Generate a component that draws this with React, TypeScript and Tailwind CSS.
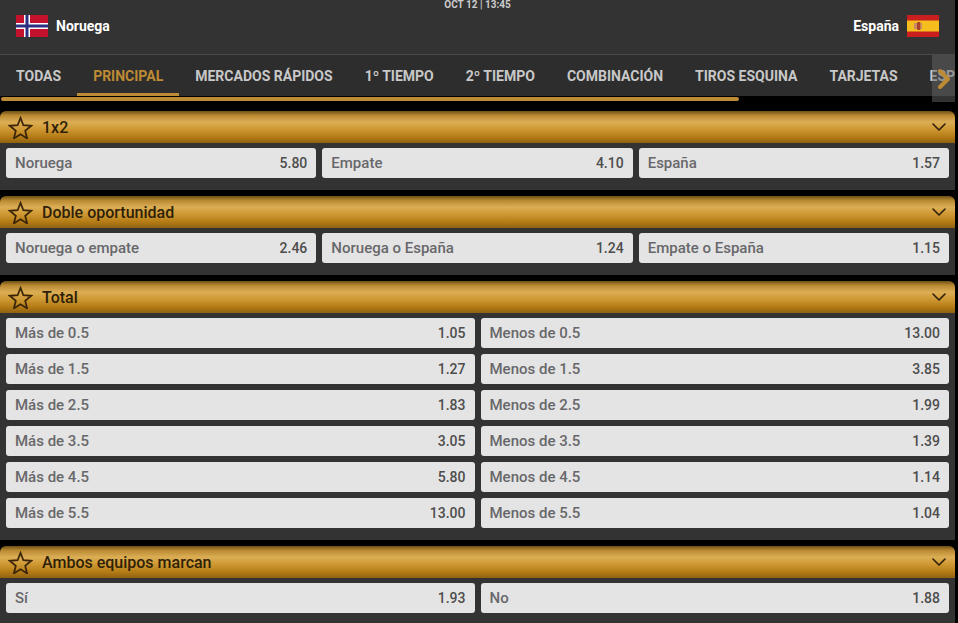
import React from 'react';
import { ChevronDown, ChevronRight } from 'lucide-react';

type Pick = { label: string; odd: string };
type Market = { title: string; cols: 2 | 3; picks: Pick[] };

const tabs = ['TODAS', 'PRINCIPAL', 'MERCADOS RÁPIDOS', '1º TIEMPO', '2º TIEMPO', 'COMBINACIÓN', 'TIROS ESQUINA', 'TARJETAS', 'ESP'];

const totals: [string, string, string][] = [
  ['0.5', '1.05', '13.00'],
  ['1.5', '1.27', '3.85'],
  ['2.5', '1.83', '1.99'],
  ['3.5', '3.05', '1.39'],
  ['4.5', '5.80', '1.14'],
  ['5.5', '13.00', '1.04'],
];

const markets: Market[] = [
  {
    title: '1x2',
    cols: 3,
    picks: [
      { label: 'Noruega', odd: '5.80' },
      { label: 'Empate', odd: '4.10' },
      { label: 'España', odd: '1.57' },
    ],
  },
  {
    title: 'Doble oportunidad',
    cols: 3,
    picks: [
      { label: 'Noruega o empate', odd: '2.46' },
      { label: 'Noruega o España', odd: '1.24' },
      { label: 'Empate o España', odd: '1.15' },
    ],
  },
  {
    title: 'Total',
    cols: 2,
    picks: totals.flatMap(([line, over, under]) => [
      { label: `Más de ${line}`, odd: over },
      { label: `Menos de ${line}`, odd: under },
    ]),
  },
  {
    title: 'Ambos equipos marcan',
    cols: 2,
    picks: [
      { label: 'Sí', odd: '1.93' },
      { label: 'No', odd: '1.88' },
    ],
  },
];

const NorwayFlag = () => (
  <svg width="32" height="22" viewBox="0 0 32 22" className="block">
    <rect width="32" height="22" fill="#c4122c" />
    <rect x="8" width="6" height="22" fill="#fff" />
    <rect y="8" width="32" height="6" fill="#fff" />
    <rect x="9.500" width="3" height="22" fill="#2b2f7f" />
    <rect y="9.500" width="32" height="3" fill="#2b2f7f" />
  </svg>
);

const SpainFlag = () => (
  <svg width="32" height="22" viewBox="0 0 32 22" className="block">
    <rect width="32" height="22" fill="#c9201f" />
    <rect y="5.500" width="32" height="11" fill="#f6bd1e" />
    <rect x="7" y="8" width="3" height="6" fill="#c98a6a" />
    <rect x="10" y="7" width="3.500" height="8" rx="1" fill="#a8402a" />
    <rect x="13.500" y="8" width="1.500" height="6" fill="#c98a6a" />
  </svg>
);

const Star = () => (
  <svg width="25" height="23" viewBox="0 0 26 24" fill="none" stroke="#3a2508" strokeWidth="1.8" strokeLinejoin="miter">
    <path d="M13 2l3 7.600 8.200.6-6.300 5.200 2 8-6.900-4.400-6.900 4.400 2-8L1.800 10.200 10 9.600z" />
  </svg>
);

const PickButton = ({ label, odd }: Pick) => (
  <div className="flex h-[30px] items-center justify-between rounded-[3px] bg-[#e4e4e4] px-[9px] text-[15px] font-medium text-[#68686b]">
    <span>{label}</span>
    <span className="text-[14px] text-[#4d4d4d]">{odd}</span>
  </div>
);

const MarketCard = ({ title, cols, picks }: Market) => (
  <section className="mb-[6px]">
    <header className="flex h-[32px] items-center justify-between rounded-t-[6px] bg-[linear-gradient(180deg,#6e4f17_0%,#b98a32_14%,#dcae55_35%,#d09a35_55%,#b67d16_80%,#8f6110_100%)] pl-[8px] pr-[4px] text-[16px] font-medium text-[#2e1f08]">
      <div className="flex items-center gap-[9px]">
        <Star />
        <span className="pt-[2px]">{title}</span>
      </div>
      <ChevronDown size={24} strokeWidth={1.6} color="#2e1f08" />
    </header>
    <div className={`grid gap-[6px] bg-[#333] px-[6px] pb-[12px] pt-[5px] ${cols === 3 ? 'grid-cols-3' : 'grid-cols-2'}`}>
      {picks.map((p) => (
        <PickButton key={p.label} label={p.label} odd={p.odd} />
      ))}
    </div>
  </section>
);

export default function App() {
  return (
    <div className="h-[623px] w-[958px] overflow-hidden bg-black font-['Roboto',sans-serif]">
      <div className="w-[955px]">
        <div className="relative flex h-[54px] items-center justify-between bg-[#333] pb-[2px] pl-[16px] pr-[16px] text-[14px] font-bold text-white">
          <span className="absolute left-0 right-0 top-0 text-center text-[10px] leading-[10px] text-[#ccc]">OCT 12 | 13:45</span>
          <div className="flex items-center gap-[8px]">
            <NorwayFlag />
            <span>Noruega</span>
          </div>
          <div className="flex items-center gap-[8px]">
            <span>España</span>
            <SpainFlag />
          </div>
        </div>

        <div className="relative border-t border-[#4a4a4a]">
          <nav className="flex h-[41px] overflow-hidden bg-[#2d2d2d]">
            {tabs.map((t) => (
              <div
                key={t}
                className={`flex shrink-0 items-center border-b-[3px] px-[16px] pt-[4px] text-[14px] font-bold ${
                  t === 'PRINCIPAL' ? 'border-[#bd8b33] text-[#bd8b33]' : 'border-transparent text-[#c8c8c8]'
                }`}
              >
                {t}
              </div>
            ))}
          </nav>
          <div className="absolute right-0 top-0 flex h-[47px] w-[23px] items-center justify-center bg-[#666]/50">
            <ChevronRight size={32} strokeWidth={3} color="#bd8b33" className="shrink-0" />
          </div>
        </div>

        <div className="mb-[10px] ml-px mt-px h-[4px] w-[738px] rounded-[2px] bg-[#bd8b33]" />

        {markets.map((m) => (
          <MarketCard key={m.title} {...m} />
        ))}
      </div>
    </div>
  );
}
